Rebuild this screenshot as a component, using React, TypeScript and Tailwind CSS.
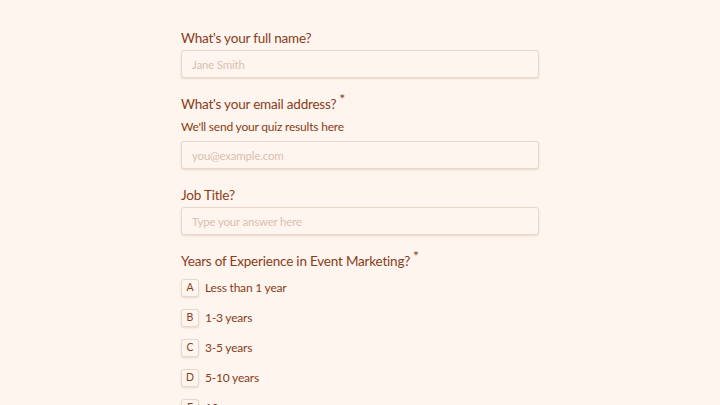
import React from 'react';

// Simple quiz-style form
type Option = { key: string; label: string };

const options: Option[] = [
  { key: 'A', label: 'Less than 1 year' },
  { key: 'B', label: '1-3 years' },
  { key: 'C', label: '3-5 years' },
  { key: 'D', label: '5-10 years' },
  { key: 'E', label: '10+ years' },
];

const Label: React.FC<{ text: string; required?: boolean }> = ({ text, required }) => (
  <h2 className="text-[13.5px] tracking-[-0.2px] leading-5 text-[#8a3c20] flex items-start">
    <span>{text}</span>
    {required && <span className="ml-[3px] text-[14px] leading-3 -mt-[1px]">*</span>}
  </h2>
);

const TextInput: React.FC<{ placeholder: string }> = ({ placeholder }) => (
  <input
    type="text"
    placeholder={placeholder}
    className="w-full h-7 px-[10px] text-[11.5px] tracking-[-0.2px] bg-[#fdf5ee] text-[#8a3c20] placeholder:text-[#dcbfb0] border border-[#ead8cc] rounded-[3px] shadow-[0_1px_2px_rgba(120,60,30,0.15)] outline-none"
  />
);

const App: React.FC = () => {
  return (
    <div
      className="min-h-screen bg-[#fdf5ee] overflow-hidden"
      style={{ fontFamily: 'Lato, "Open Sans", sans-serif' }}
    >
      <div className="w-[358px] ml-[181px] pt-[28px] h-[405px]">
        <Label text="What's your full name?" />
        <div className="mt-[2px]">
          <TextInput placeholder="Jane Smith" />
        </div>

        <div className="mt-4">
          <Label text="What's your email address?" required />
        </div>
        <p className="mt-[5px] text-[12px] tracking-[-0.2px] leading-4 text-[#8a3c20]">We'll send your quiz results here</p>
        <div className="mt-[6px]">
          <TextInput placeholder="you@example.com" />
        </div>

        <div className="mt-4">
          <Label text="Job Title?" />
        </div>
        <div className="mt-[2px]">
          <TextInput placeholder="Type your answer here" />
        </div>

        <div className="mt-4">
          <Label text="Years of Experience in Event Marketing?" required />
        </div>
        <div className="mt-[8px] flex flex-col gap-3">
          {options.map((o) => (
            <div key={o.key} className="flex items-center gap-[6px]">
              <div className="w-[18px] h-[18px] flex items-center justify-center border border-[#ead8cc] rounded-[3px] bg-[#fdf5ee] shadow-[0_1px_2px_rgba(120,60,30,0.15)] text-[10.5px] text-[#8a3c20]">
                {o.key}
              </div>
              <span className="text-[12px] tracking-[-0.2px] leading-4 text-[#8a3c20]">{o.label}</span>
            </div>
          ))}
        </div>
      </div>
    </div>
  );
};

export default App;
